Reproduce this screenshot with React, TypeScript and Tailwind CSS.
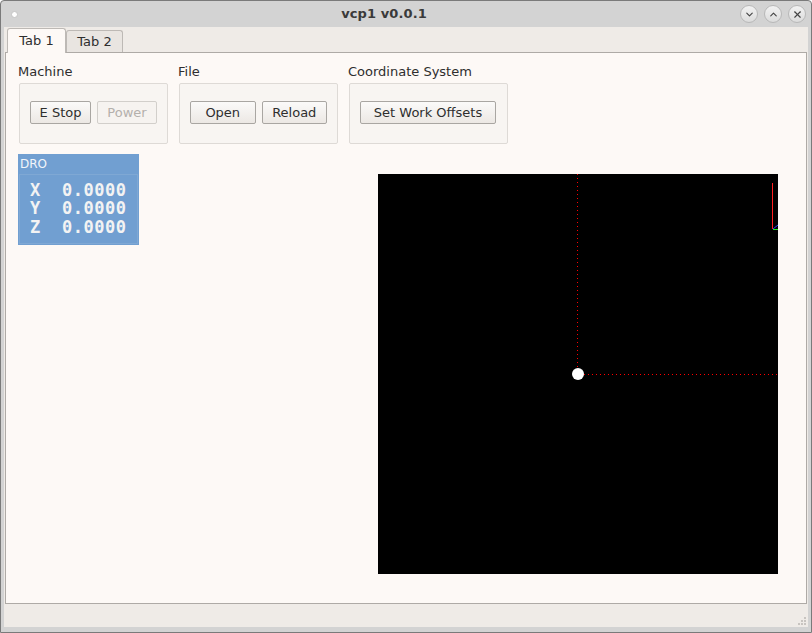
import { ChevronDown, ChevronUp, X } from 'lucide-react';

const ui = { fontFamily: '"DejaVu Sans", sans-serif' };
const mono = { fontFamily: '"DejaVu Sans Mono", monospace' };

function TitleButton({ children }: { children: React.ReactNode }) {
  return (
    <div className="w-[18px] h-[18px] rounded-full border border-[#b8b8b8] bg-gradient-to-b from-[#f2f2f2] to-[#dcdcdc] flex items-center justify-center text-[#444]">
      {children}
    </div>
  );
}

function Btn({ label, w, disabled }: { label: string; w: number; disabled?: boolean }) {
  return (
    <div
      style={{ width: w }}
      className={
        'h-[23px] rounded-[2px] border flex items-center justify-center text-[13px] ' +
        (disabled
          ? 'border-[#d2cfcb] bg-[#f6f3f0] text-[#b4b0ac]'
          : 'border-[#a9a6a2] bg-gradient-to-b from-[#fbfaf9] to-[#ece8e4] text-[#2e2e2e]')
      }
    >
      {label}
    </div>
  );
}

function Group({ title, w, children }: { title: string; w: number; children: React.ReactNode }) {
  return (
    <div className="flex flex-col">
      <div className="h-[19px] text-[13px] text-[#2e2e2e] leading-[16px]">{title}</div>
      <div
        style={{ width: w }}
        className="h-[61px] ml-[1px] border border-[#dedad6] rounded-[2px] bg-[#f8f5f2] flex items-start pt-[17px] px-[10px] gap-[6px]"
      >
        {children}
      </div>
    </div>
  );
}

function DroRow({ axis }: { axis: string }) {
  return (
    <div className="flex h-[18.5px] items-center text-[17px] font-bold text-[#f3f3f3]" style={mono}>
      <span className="w-[42px] pl-[10px]">{axis}</span>
      <span className="tracking-[0.5px]">0.0000</span>
    </div>
  );
}

export default function App() {
  return (
    <div className="w-[812px] h-[633px] flex flex-col bg-[#d3d3d3] border border-[#7a7a7a] rounded-t-[4px] overflow-hidden" style={ui}>
      <div className="h-[26px] flex items-center px-[10px] relative">
        <div className="w-[7px] h-[7px] rounded-full bg-white border border-[#c4c4c4]" />
        <div className="flex-1 text-center text-[13px] font-bold text-[#3a3a3a] pl-[10px] tracking-[0.1px]">vcp1 v0.0.1</div>
        <div className="flex gap-[6px] -mr-[5px]">
          <TitleButton><ChevronDown size={11} strokeWidth={2.5} /></TitleButton>
          <TitleButton><ChevronUp size={11} strokeWidth={2.5} /></TitleButton>
          <TitleButton><X size={11} strokeWidth={2.5} /></TitleButton>
        </div>
      </div>
      <div className="flex-1 mx-[3px] mb-[5px] bg-[#efebe7] flex flex-col">
        <div className="h-[25px] flex items-end pl-[3px] pt-[1px]">
          <div className="w-[59px] h-[25px] bg-[#fdf9f6] border border-[#bdb9b5] border-b-0 rounded-t-[3px] flex items-center justify-center text-[13px] text-[#2e2e2e] relative z-10 -mb-[1px]">
            Tab 1
          </div>
          <div className="w-[57px] h-[22px] bg-[#e9e5e1] border border-[#bdb9b5] border-b-0 rounded-t-[3px] flex items-center justify-center text-[13px] text-[#2e2e2e]">
            Tab 2
          </div>
        </div>
        <div className="h-[552px] mx-[1px] bg-[#fdf9f6] border border-[#aeaaa6] flex flex-col px-[12px] pt-[11px]">
          <div className="flex gap-[10px]">
            <Group title="Machine" w={149}>
              <Btn label="E Stop" w={62} />
              <Btn label="Power" w={61} disabled />
            </Group>
            <Group title="File" w={159}>
              <Btn label="Open" w={66} />
              <Btn label="Reload" w={66} />
            </Group>
            <Group title="Coordinate System" w={159}>
              <Btn label="Set Work Offsets" w={136} />
            </Group>
          </div>
          <div className="flex mt-[10px]">
            <div className="w-[121px] h-[91px] bg-[#719fd1] flex flex-col">
              <div className="h-[20px] px-[2px] text-[12px] leading-[20px] text-[#f2f5fa]">DRO</div>
              <div className="flex-1 mx-[1px] mb-[1px] border border-[#7fa8d4] pt-[6px]">
                <DroRow axis="X" />
                <DroRow axis="Y" />
                <DroRow axis="Z" />
              </div>
            </div>
            <div className="ml-[239px] mt-[20px] w-[400px] h-[400px] bg-black">
              <svg width="400" height="400" viewBox="0 0 400 400">
                <line x1="199.5" y1="0" x2="199.5" y2="196" stroke="#ff0000" strokeWidth="1" strokeDasharray="1 3" />
                <line x1="206" y1="200.5" x2="400" y2="200.5" stroke="#ff0000" strokeWidth="1" strokeDasharray="1 3" />
                <circle cx="200" cy="200" r="6" fill="#ffffff" />
                <line x1="394.5" y1="9" x2="394.5" y2="55" stroke="#ff2020" strokeWidth="1" />
                <line x1="395" y1="55.5" x2="400" y2="55.5" stroke="#22ee22" strokeWidth="1" />
                <line x1="395" y1="55" x2="400" y2="51" stroke="#3344ff" strokeWidth="1" />
              </svg>
            </div>
          </div>
        </div>
        <div className="flex-1 relative">
          <div className="absolute right-[2px] bottom-[2px] grid grid-cols-3 gap-[1px]">
            <span className="w-[2px] h-[2px]" />
            <span className="w-[2px] h-[2px]" />
            <span className="w-[2px] h-[2px] bg-[#c8c4c0]" />
            <span className="w-[2px] h-[2px]" />
            <span className="w-[2px] h-[2px] bg-[#c8c4c0]" />
            <span className="w-[2px] h-[2px] bg-[#c8c4c0]" />
            <span className="w-[2px] h-[2px] bg-[#c8c4c0]" />
            <span className="w-[2px] h-[2px] bg-[#c8c4c0]" />
            <span className="w-[2px] h-[2px] bg-[#c8c4c0]" />
          </div>
        </div>
      </div>
    </div>
  );
}
